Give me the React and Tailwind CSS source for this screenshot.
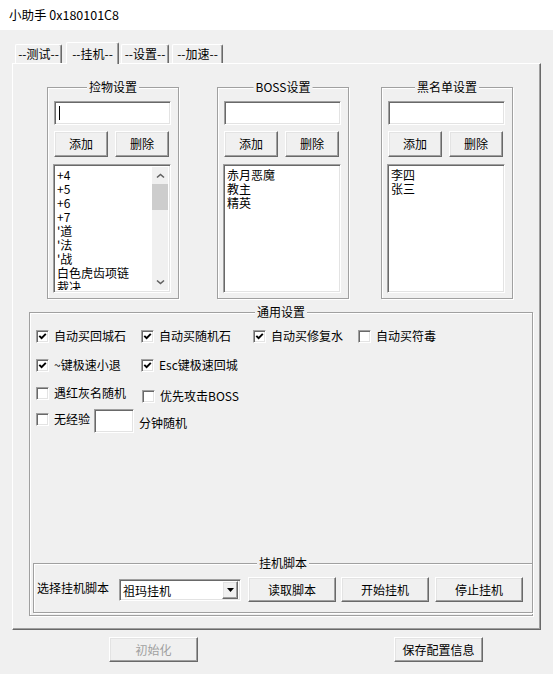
import React from "react";

const raised =
  "bg-[#f0f0f0] border border-t-white border-l-white border-r-[#696969] border-b-[#696969] shadow-[inset_-1px_-1px_0_#a0a0a0,inset_1px_1px_0_#e3e3e3]";
const sunken =
  "bg-white border border-t-[#a0a0a0] border-l-[#a0a0a0] border-r-white border-b-white shadow-[inset_1px_1px_0_#696969,inset_-1px_-1px_0_#e3e3e3]";
const etched =
  "border border-[#a0a0a0] shadow-[inset_1px_1px_0_#ffffff,1px_1px_0_#ffffff]";

const Btn = ({ children, className = "", disabled = false }) => (
  <button
    className={`${raised} flex items-center justify-center leading-none ${
      disabled ? "text-[#a0a0a0]" : "text-black"
    } ${className}`}
  >
    {children}
  </button>
);

const Check = ({ checked, label, className = "" }) => (
  <div className={`flex items-center ${className}`}>
    <span
      className={`${sunken} w-[13px] h-[13px] shrink-0 flex items-center justify-center`}
    >
      {checked && (
        <svg width="9" height="9" viewBox="0 0 9 9">
          <path
            d="M1.3 3.8 L3.6 6.2 L7.8 1.8"
            stroke="#000"
            strokeWidth="1.9"
            fill="none"
          />
        </svg>
      )}
    </span>
    <span className="ml-[5px] leading-[14px] whitespace-nowrap">{label}</span>
  </div>
);

const GroupBox = ({ title, className = "", children }) => (
  <div className={`relative ${etched} ${className}`}>
    <span className="absolute left-1/2 -translate-x-1/2 top-[-9px] px-[2px] bg-[#f0f0f0] leading-[16px] whitespace-nowrap">
      {title}
    </span>
    {children}
  </div>
);

const Chevron = ({ down }) => (
  <svg width="9" height="6" viewBox="0 0 9 6">
    <polyline
      points={down ? "1,1.5 4.5,4.5 8,1.5" : "1,4.5 4.5,1.5 8,4.5"}
      stroke="#606060"
      strokeWidth="1.6"
      fill="none"
    />
  </svg>
);

const ListPanel = ({ title, items, scroll, cursor }) => (
  <GroupBox title={title} className="w-[132px] h-[212px] pt-[13px] pl-[6px]">
    <div className={`${sunken} w-[117px] h-[24px] flex items-center pl-[4px]`}>
      {cursor && <span className="w-px h-[14px] bg-black" />}
    </div>
    <div className="flex gap-[7px] mt-[6px]">
      <Btn className="w-[54px] h-[26px]">添加</Btn>
      <Btn className="w-[54px] h-[26px]">删除</Btn>
    </div>
    <div
      className={`${sunken} mt-[7px] -ml-px w-[118px] h-[129px] flex overflow-hidden p-[2px]`}
    >
      <div className="flex-1 pt-px pl-px leading-[14px] overflow-hidden">
        {items.map((t) => (
          <div key={t} className="h-[14px] whitespace-nowrap">
            {t}
          </div>
        ))}
      </div>
      {scroll && (
        <div className="w-[16px] h-full bg-[#f0f0f0] flex flex-col">
          <div className="h-[17px] flex items-center justify-center">
            <Chevron />
          </div>
          <div className="h-[26px] bg-[#cdcdcd]" />
          <div className="flex-1" />
          <div className="h-[17px] flex items-center justify-center">
            <Chevron down />
          </div>
        </div>
      )}
    </div>
  </GroupBox>
);

const tabs = [
  { label: "--测试--", w: "w-[47px]", ml: "ml-[15px]" },
  { label: "--挂机--", w: "w-[53px]", ml: "ml-[4px]", active: true },
  { label: "--设置--", w: "w-[48px]", ml: "ml-[2px]" },
  { label: "--加速--", w: "w-[51px]", ml: "ml-[3px]" },
];

export default function App() {
  return (
    <div className="w-[553px] h-[674px] bg-[#f0f0f0] text-[12px] text-black font-['Noto_Sans_CJK_SC','Noto_Sans',sans-serif] overflow-hidden">
      {/* title bar */}
      <div className="h-[30px] bg-white flex items-center pl-[9px] text-[12.5px]">
        小助手 0x180101C8
      </div>

      {/* tabs */}
      <div className="h-[33px] flex items-end">
        {tabs.map((t) => (
          <div
            key={t.label}
            className={`${t.w} ${t.ml} flex items-center justify-center whitespace-nowrap bg-[#f0f0f0] border-t border-l border-white border-r border-r-[#696969] shadow-[inset_-1px_0_0_#a0a0a0] rounded-t-[2px] ${
              t.active ? "h-[22px] -mb-px relative z-10" : "h-[19px]"
            }`}
          >
            {t.label}
          </div>
        ))}
      </div>

      {/* tab panel */}
      <div className="ml-[12px] w-[529px] h-[567px] border-t border-l border-white border-r border-b border-r-[#696969] border-b-[#696969] shadow-[inset_-1px_-1px_0_#a0a0a0]">
        <div className="flex pt-[23px] pl-[34px]">
          <ListPanel
            title="捡物设置"
            cursor
            scroll
            items={["+4", "+5", "+6", "+7", "'道", "'法", "'战", "白色虎齿项链", "裁决"]}
          />
          <div className="ml-[38px]">
            <ListPanel title="BOSS设置" items={["赤月恶魔", "教主", "精英"]} />
          </div>
          <div className="ml-[32px]">
            <ListPanel title="黑名单设置" items={["李四", "张三"]} />
          </div>
        </div>

        <GroupBox
          title="通用设置"
          className="ml-[16px] mt-[13px] w-[504px] h-[304px] flex flex-col"
        >
          <div className="pl-[6px] pt-[16px]">
            <div className="flex">
              <Check checked label="自动买回城石" className="w-[105px]" />
              <Check checked label="自动买随机石" className="w-[112px]" />
              <Check checked label="自动买修复水" className="w-[105px]" />
              <Check label="自动买符毒" />
            </div>
            <div className="flex mt-[15px]">
              <Check checked label="~键极速小退" className="w-[105px]" />
              <Check checked label="Esc键极速回城" />
            </div>
            <div className="flex items-start mt-[14px]">
              <Check label="遇红灰名随机" className="w-[106px]" />
              <Check label="优先攻击BOSS" className="mt-[3px]" />
            </div>
            <div className="flex items-start mt-[9px]">
              <Check label="无经验" />
              <div className={`${sunken} w-[40px] h-[24px] ml-[4px] -mt-[3px]`} />
              <span className="ml-[5px] mt-[4px] leading-[14px]">分钟随机</span>
            </div>
          </div>

          <GroupBox
            title="挂机脚本"
            className="mt-auto mb-[2px] ml-[3px] w-[500px] h-[50px]"
          >
            <div className="flex items-center pt-[13px] pl-[3px]">
              <span className="w-[82px] leading-[14px] -mt-[3px]">选择挂机脚本</span>
              <div className={`${sunken} w-[122px] h-[22px] flex items-center p-[2px]`}>
                <span className="flex-1 pl-[1px] leading-[14px] mt-[2px]">祖玛挂机</span>
                <div className={`${raised} w-[16px] h-[18px] flex items-center justify-center`}>
                  <svg width="7" height="4" viewBox="0 0 7 4">
                    <polygon points="0,0 7,0 3.5,4" fill="#000" />
                  </svg>
                </div>
              </div>
              <Btn className="w-[88px] h-[25px] ml-[7px]">读取脚本</Btn>
              <Btn className="w-[88px] h-[25px] ml-[5px]">开始挂机</Btn>
              <Btn className="w-[88px] h-[25px] ml-[6px]">停止挂机</Btn>
            </div>
          </GroupBox>
        </GroupBox>
      </div>

      {/* bottom buttons */}
      <div className="flex mt-[7px]">
        <Btn disabled className="w-[89px] h-[25px] ml-[109px]">
          初始化
        </Btn>
        <Btn className="w-[89px] h-[25px] ml-[196px]">保存配置信息</Btn>
      </div>
    </div>
  );
}
